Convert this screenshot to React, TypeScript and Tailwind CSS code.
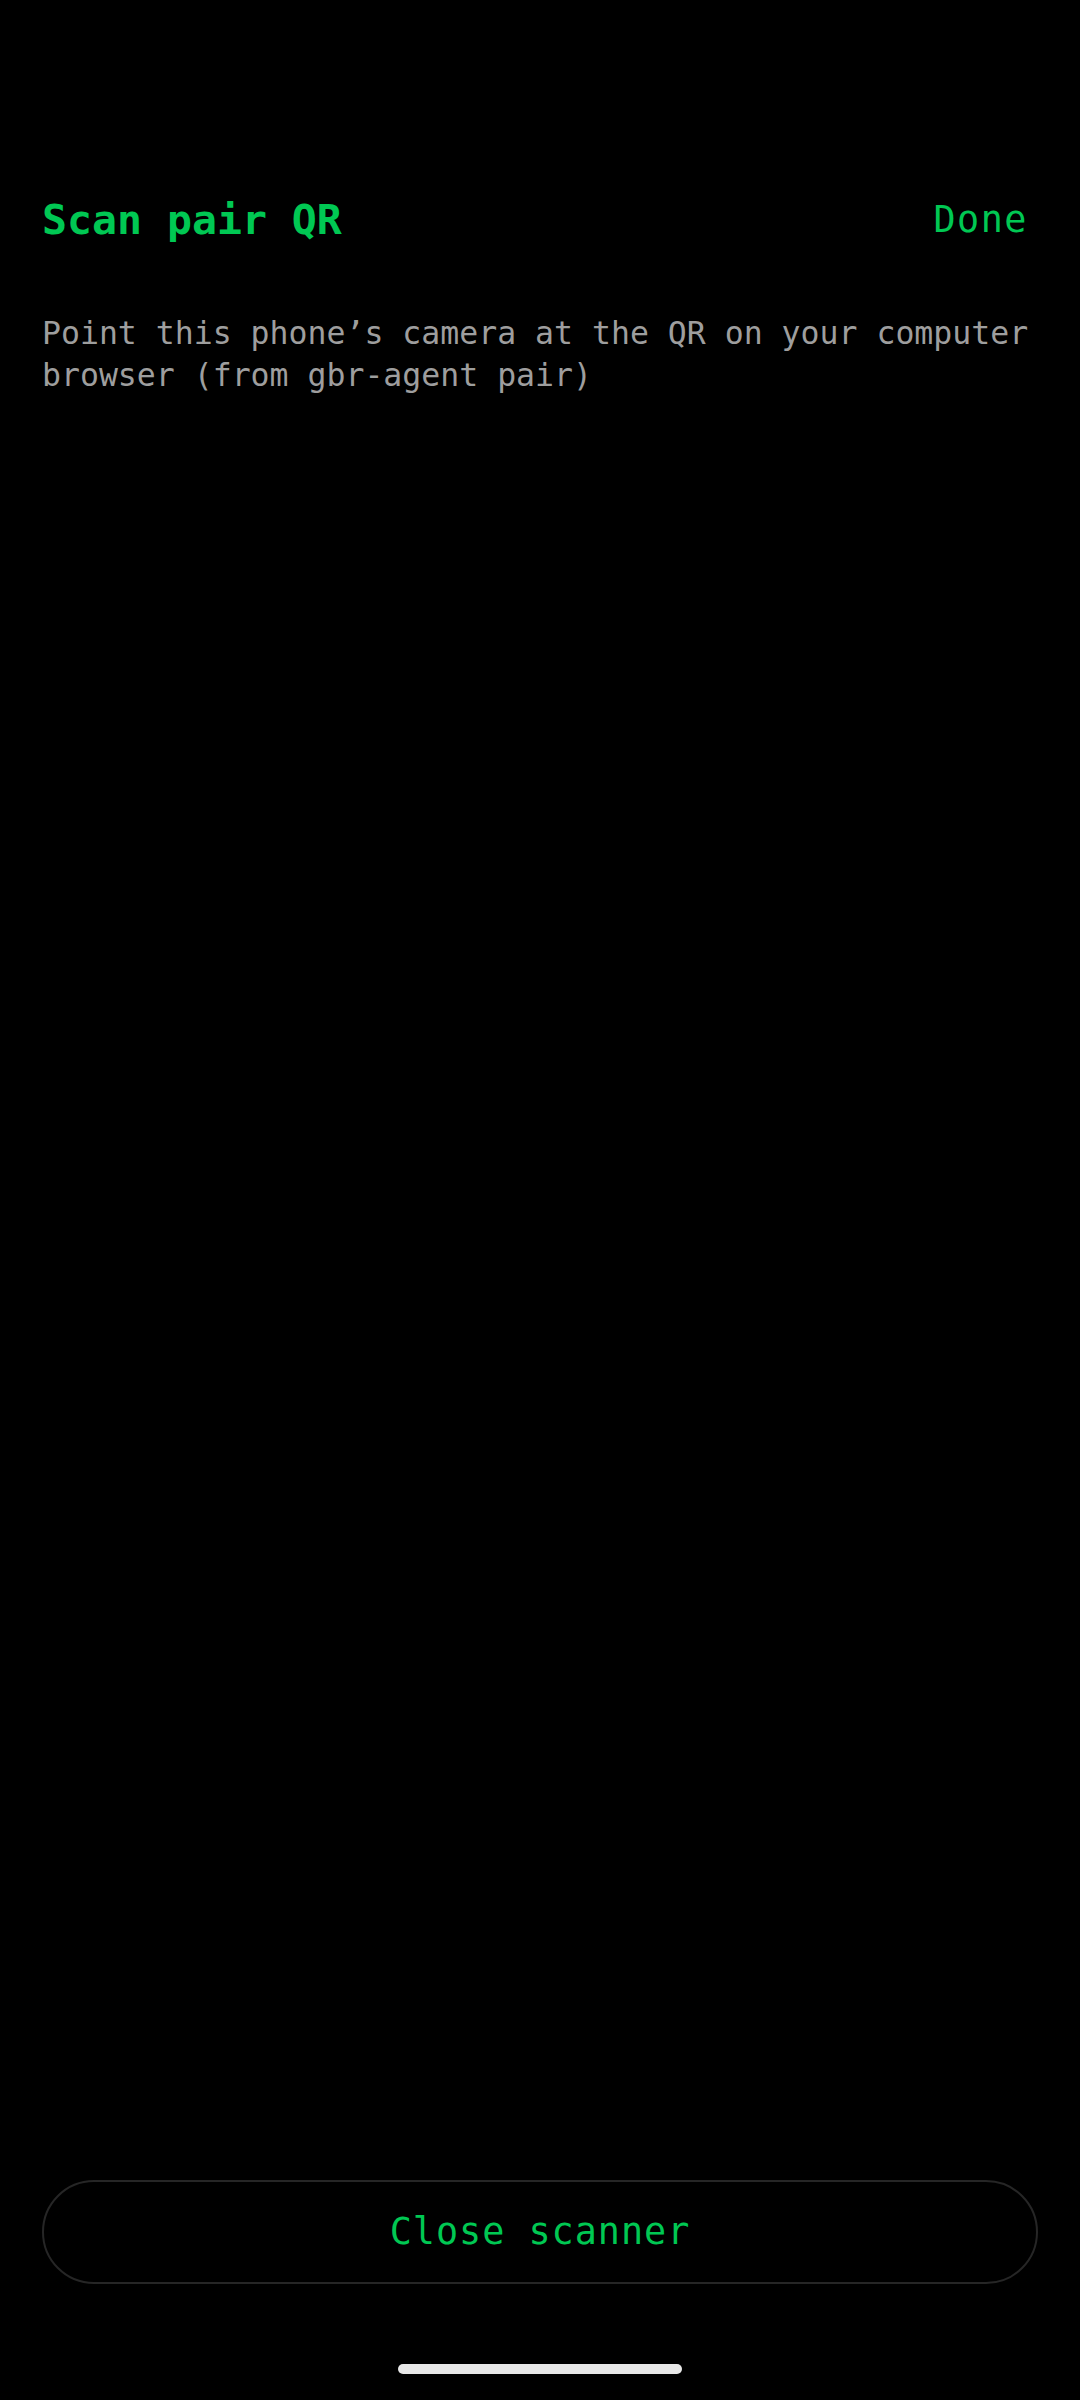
export default function App() {
  return (
    <div
      className="flex h-[2400px] w-full flex-col bg-black px-[42px] pt-[195px]"
      style={{ fontFamily: '"DejaVu Sans Mono", "Liberation Mono", monospace' }}
    >
      <div className="flex h-[50px] items-center justify-between">
        <h1 className="text-[41.5px] font-bold leading-[50px] text-[#00c853]">Scan pair QR</h1>
        <button className="mr-[10px] text-[36.75px] leading-[50px] tracking-[1.5px] text-[#00c853]">
          Done
        </button>
      </div>
      <p className="mt-[68px] text-[31.5px] leading-[41.5px] text-[#9e9e9e]">
        Point this phone’s camera at the QR on your computer browser (from gbr-agent pair)
      </p>
      <div className="flex-1" />
      <button className="flex h-[104px] w-full items-center justify-center rounded-full border-2 border-[#262626] text-[36.75px] tracking-[1px] text-[#00c853]">
        Close scanner
      </button>
      <div className="mx-auto mt-[80px] h-[10px] w-[284px] rounded-full bg-[#e8e8e8]" />
      <div className="h-[26px]" />
    </div>
  );
}
